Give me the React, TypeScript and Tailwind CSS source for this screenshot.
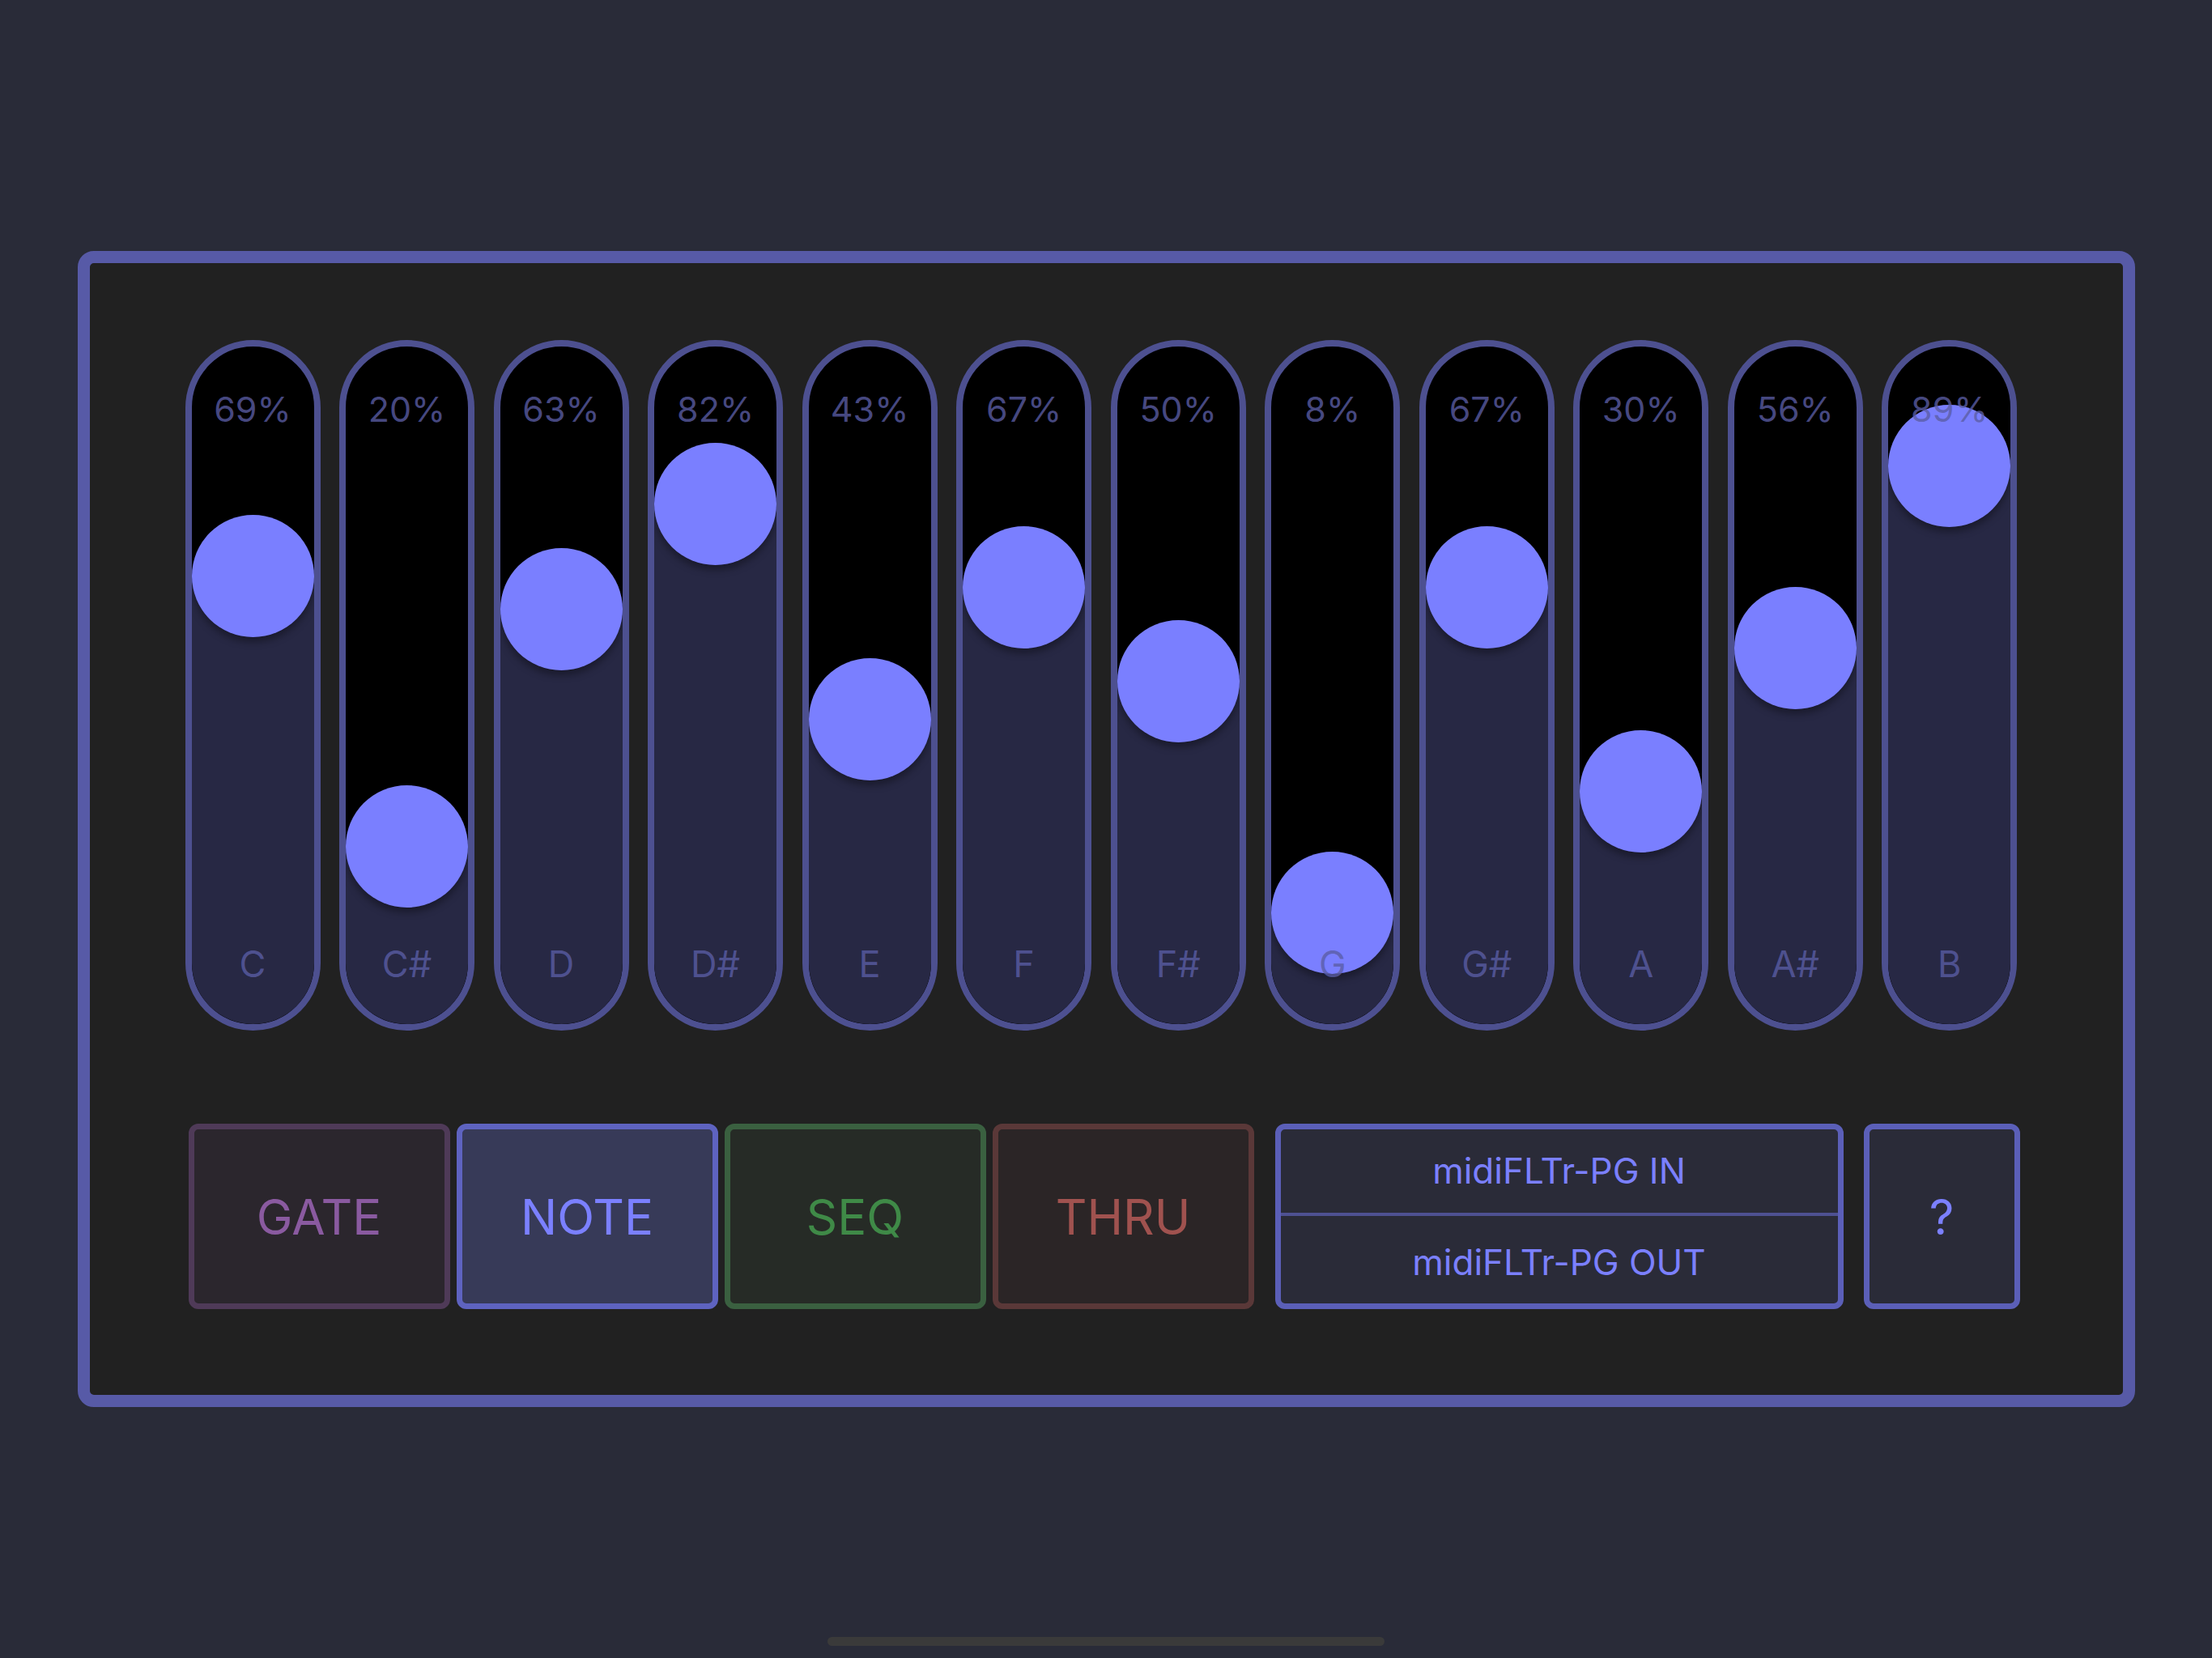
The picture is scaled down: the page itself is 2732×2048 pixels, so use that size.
import React from "react";

const NOTES: [string, number][] = [
  ["C", 69],
  ["C#", 20],
  ["D", 63],
  ["D#", 82],
  ["E", 43],
  ["F", 67],
  ["F#", 50],
  ["G", 8],
  ["G#", 67],
  ["A", 30],
  ["A#", 56],
  ["B", 89],
];

function Slider({ label, value }: { label: string; value: number }) {
  const center = 754 - 6.82 * value;
  return (
    <div className="relative w-[167px] h-[853px] shrink-0 rounded-full border-[8px] border-[#4d5090] bg-black overflow-hidden">
      <div className="absolute inset-x-0 bottom-0 bg-[#272844]" style={{ height: 837 - center }} />
      <div
        className="absolute left-0 w-[151px] h-[151px] rounded-full bg-[#7a7fff] shadow-[0_6px_10px_rgba(0,0,0,0.35)]"
        style={{ top: center - 75.5 }}
      />
      <div className="absolute inset-x-0 top-[56px] text-center text-[43px] leading-[43px] text-[#5a5da5]/80">
        {value}%
      </div>
      <div className="absolute inset-x-0 top-[740px] text-center text-[45px] leading-[45px] text-[#5a5da5]/80">
        {label}
      </div>
    </div>
  );
}

export default function App() {
  return (
    <div className="relative w-[2732px] h-[2048px] bg-[#292b38] flex items-center justify-center font-['Inter',sans-serif]">
      <div className="w-[2541px] h-[1428px] rounded-[20px] border-[15px] border-[#575aa7] bg-[#212121] flex flex-col">
        <div className="mt-[95px] ml-[118px] w-[2263px] flex justify-between">
          {NOTES.map(([l, v]) => (
            <Slider key={l} label={l} value={v} />
          ))}
        </div>
        <div className="mt-[115px] ml-[122px] flex h-[229px]">
          <div className="flex gap-[8px]">
            <button className="w-[323px] h-full rounded-[12px] border-[7px] border-[#4f3a58] bg-[#2b262d] text-[60px] text-[#8a5aa0]">
              GATE
            </button>
            <button className="w-[323px] h-full rounded-[12px] border-[7px] border-[#5e63c0] bg-[#373a58] text-[60px] text-[#7b80ff]">
              NOTE
            </button>
            <button className="w-[323px] h-full rounded-[12px] border-[7px] border-[#3a6040] bg-[#262b26] text-[60px] text-[#3f8a47]">
              SEQ
            </button>
            <button className="w-[323px] h-full rounded-[12px] border-[7px] border-[#5a3838] bg-[#2b2526] text-[60px] text-[#a0524f]">
              THRU
            </button>
          </div>
          <div className="ml-[26px] w-[702px] h-full rounded-[12px] border-[7px] border-[#5b5fb8] bg-[#2a2b38] flex flex-col text-[44px] text-[#7b80ff]">
            <div className="flex-1 flex items-center justify-center border-b-[4px] border-[#4e5192]">
              midiFLTr-PG IN
            </div>
            <div className="flex-1 flex items-center justify-center pt-[6px]">midiFLTr-PG OUT</div>
          </div>
          <button className="ml-[25px] w-[193px] h-full rounded-[12px] border-[7px] border-[#5b5fb8] bg-[#2a2b38] text-[60px] text-[#7b80ff]">
            ?
          </button>
        </div>
      </div>
      <div className="absolute left-[1022px] bottom-[15px] w-[688px] h-[11px] rounded-full bg-[#3a3a3a]" />
    </div>
  );
}
